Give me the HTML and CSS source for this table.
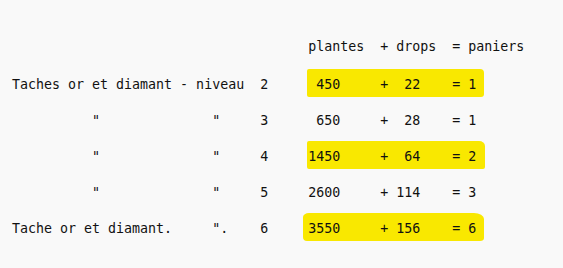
FILE: index.html
```html
<!DOCTYPE html>
<html lang="fr">
<head>
<meta charset="utf-8">
<title>Paniers</title>
<link rel="stylesheet" href="styles.css">
</head>
<body>
<div class="sheet">
  <div class="row head"><span class="l"></span><span class="r">plantes  + drops  = paniers</span></div>
  <div class="row"><span class="l">Taches or et diamant - niveau  2</span><span class="r hl hl1"> 450     +  22    = 1</span></div>
  <div class="row"><span class="l">          "              "     3</span><span class="r"> 650     +  28    = 1</span></div>
  <div class="row"><span class="l">          "              "     4</span><span class="r hl hl2">1450     +  64    = 2</span></div>
  <div class="row"><span class="l">          "              "     5</span><span class="r">2600     + 114    = 3</span></div>
  <div class="row"><span class="l">Tache or et diamant.     ".    6</span><span class="r hl hl3">3550     + 156    = 6</span></div>
</div>
</body>
</html>
```
FILE: styles.css
```css
html, body {
  margin: 0;
  padding: 0;
  background: #f9f9f9;
}
.sheet {
  padding: 29px 0 0 12px;
  font-family: "DejaVu Sans Mono", "Liberation Mono", monospace;
  font-size: 13.3px;
  color: #111;
}
.row {
  white-space: pre;
  line-height: 36px;
  height: 36px;
}
.head {
  margin-bottom: 2px;
}
.l {
  display: inline-block;
  width: 37ch;
}
.r {
  display: inline-block;
}
.hl {
  background: #f9e800;
  line-height: 24px;
  padding-top: 4px;
  width: 22ch;
}
.hl1 {
  margin-left: -1px;
  padding-left: 1px;
  border-radius: 2px 4px 3px 2px / 2px 4px 3px 2px;
}
.hl2 {
  margin-left: -1px;
  padding-left: 1px;
  width: calc(22ch + 1px);
  border-radius: 2px 6px 2px 2px / 2px 5px 2px 2px;
}
.hl3 {
  margin-left: -5px;
  padding-left: 5px;
  border-radius: 6px 10px 4px 4px / 4px 6px 3px 4px;
}
```
